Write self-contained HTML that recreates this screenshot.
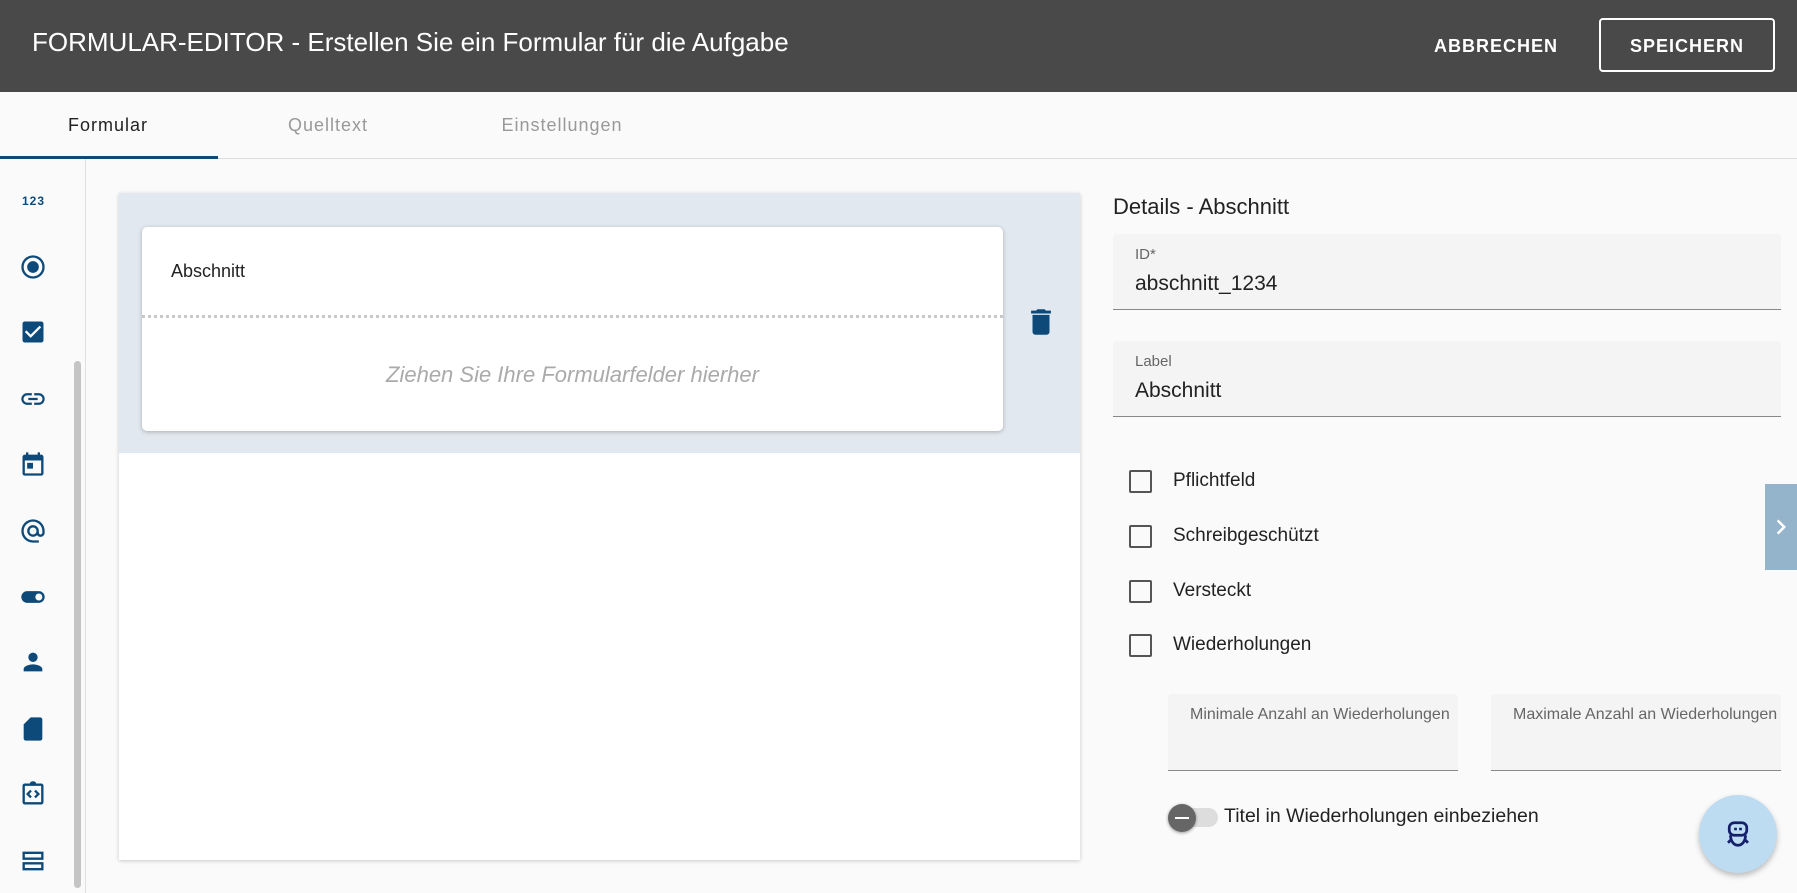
<!DOCTYPE html>
<html><head><meta charset="utf-8"><style>
*{box-sizing:border-box;margin:0;padding:0}
body{width:1797px;height:893px;overflow:hidden;background:#fafafa;font-family:"Liberation Sans",sans-serif;position:relative;color:#222}
.abs{position:absolute}
.hdr{left:0;top:0;width:1797px;height:92px;background:#494949;color:#fff}
.title{left:32px;top:27px;font-size:26px;white-space:nowrap}
.btn{font-size:18px;font-weight:bold;letter-spacing:1px;color:#fff}
.tabs{left:0;top:92px;width:1797px;height:67px;border-bottom:1px solid #ddd;background:#fafafa}
.tab{top:115px;font-size:18px;letter-spacing:1px;color:#999;transform:translateX(-50%)}
.side{left:0;top:159px;width:86px;height:734px;border-right:1px solid #e0e0e0}
.ic{left:19px;width:28px;height:28px;fill:#0d4a7a}
.field{background:#f4f4f4;border-bottom:1px solid #888;border-radius:4px 4px 0 0}
.flab{font-size:15px;color:#666;position:absolute;left:22px;top:12px;white-space:nowrap;overflow:hidden}
.fval{font-size:21px;color:#222;position:absolute;left:22px;top:38px}
.cb{left:1129px;width:23px;height:23px;border:2px solid #555;border-radius:2px}
.cbl{left:1173px;font-size:19px;color:#222}
</style></head><body>
<div class="abs hdr"></div>
<div class="abs title" style="color:#fff">FORMULAR-EDITOR - Erstellen Sie ein Formular für die Aufgabe</div>
<div class="abs btn" style="left:1434px;top:36px">ABBRECHEN</div>
<div class="abs" style="left:1599px;top:18px;width:176px;height:54px;border:2px solid #fff;border-radius:4px"></div>
<div class="abs btn" style="left:1599px;top:36px;width:176px;text-align:center">SPEICHERN</div>

<div class="abs tabs"></div>
<div class="abs tab" style="left:108px;color:#222">Formular</div>
<div class="abs tab" style="left:328px">Quelltext</div>
<div class="abs tab" style="left:562px">Einstellungen</div>
<div class="abs" style="left:0;top:156px;width:218px;height:3px;background:#0d4a7a"></div>

<div class="abs side"></div>
<div class="abs" style="left:74px;top:361px;width:7px;height:527px;background:#c4c4c4;border-radius:4px"></div>
<div class="abs" style="left:22px;top:194px;font-size:12px;font-weight:bold;color:#0d4a7a;letter-spacing:1px">123</div>
<svg class="abs ic" style="top:253px" viewBox="0 0 24 24"><path d="M12 7a5 5 0 100 10 5 5 0 000-10zm0-5a10 10 0 100 20 10 10 0 000-20zm0 18a8 8 0 110-16 8 8 0 010 16z"/></svg>
<svg class="abs ic" style="top:318px" viewBox="0 0 24 24"><path d="M19 3H5a2 2 0 00-2 2v14a2 2 0 002 2h14a2 2 0 002-2V5a2 2 0 00-2-2zm-9 14l-5-5 1.4-1.4 3.6 3.6 7.6-7.6L19 8l-9 9z"/></svg>
<svg class="abs ic" style="top:385px" viewBox="0 0 24 24"><path d="M3.9 12c0-1.7 1.4-3.1 3.1-3.1h4V7H7a5 5 0 000 10h4v-1.9H7c-1.7 0-3.1-1.4-3.1-3.1zM8 13h8v-2H8v2zm9-6h-4v1.9h4c1.7 0 3.1 1.4 3.1 3.1s-1.4 3.1-3.1 3.1h-4V17h4a5 5 0 000-10z"/></svg>
<svg class="abs ic" style="top:450px" viewBox="0 0 24 24"><path d="M19 4h-1V2h-2v2H8V2H6v2H5a2 2 0 00-2 2v14a2 2 0 002 2h14a2 2 0 002-2V6a2 2 0 00-2-2zm0 16H5V9h14v11zM7 11h5v5H7z"/></svg>
<svg class="abs ic" style="top:517px" viewBox="0 0 24 24"><path d="M12 2a10 10 0 000 20h5v-2h-5a8 8 0 118-8v1.4c0 .8-.7 1.6-1.5 1.6s-1.5-.8-1.5-1.6V12a5 5 0 10-1.5 3.5 3.7 3.7 0 003 1.5c2 0 3.5-1.6 3.5-3.6V12A10 10 0 0012 2zm0 13a3 3 0 110-6 3 3 0 010 6z"/></svg>
<svg class="abs ic" style="top:583px" viewBox="0 0 24 24"><path d="M17 7H7a5 5 0 000 10h10a5 5 0 000-10zm0 8a3 3 0 110-6 3 3 0 010 6z"/></svg>
<svg class="abs ic" style="top:648px" viewBox="0 0 24 24"><path d="M12 12a4 4 0 100-8 4 4 0 000 8zm0 2c-2.7 0-8 1.3-8 4v2h16v-2c0-2.7-5.3-4-8-4z"/></svg>
<svg class="abs ic" style="top:715px" viewBox="0 0 24 24"><path d="M10 2h8a2 2 0 012 2v16a2 2 0 01-2 2H6a2 2 0 01-2-2V8z"/></svg>
<svg class="abs ic" style="top:780px" viewBox="0 0 24 24"><path d="M19 3h-4.2A3 3 0 009.2 3H5a2 2 0 00-2 2v14a2 2 0 002 2h14a2 2 0 002-2V5a2 2 0 00-2-2zm0 16H5V5h14v14zM9.6 15.6L6 12l3.6-3.6L11 9.8 8.8 12l2.2 2.2zm4.8 0L13 14.2l2.2-2.2L13 9.8l1.4-1.4L18 12z"/></svg>
<svg class="abs ic" style="top:847px" viewBox="0 0 24 24"><path d="M3 4h18v7H3zm2 2v3h14V6zM3 13h18v7H3zm2 2v3h14v-3z"/></svg>

<div class="abs" style="left:119px;top:193px;width:961px;height:667px;background:#fff;box-shadow:0 1px 4px rgba(0,0,0,.2)"></div>
<div class="abs" style="left:119px;top:193px;width:961px;height:260px;background:#e1e8ef"></div>
<div class="abs" style="left:142px;top:227px;width:861px;height:204px;background:#fff;border-radius:5px;box-shadow:0 1px 4px rgba(0,0,0,.25)"></div>
<div class="abs" style="left:171px;top:261px;font-size:18px;color:#222">Abschnitt</div>
<div class="abs" style="left:142px;top:315px;width:861px;border-top:3px dotted #c8c8c8"></div>
<div class="abs" style="left:142px;top:362px;width:861px;text-align:center;font-size:22px;font-style:italic;color:#aaa">Ziehen Sie Ihre Formularfelder hierher</div>
<svg class="abs" style="left:1024px;top:304px;width:34px;height:36px" viewBox="0 0 24 24"><path fill="#0d4a7a" d="M6 19a2 2 0 002 2h8a2 2 0 002-2V7H6v12zM19 4h-3.5l-1-1h-5l-1 1H5v2h14V4z"/></svg>

<div class="abs" style="left:1113px;top:194px;font-size:22px;color:#222">Details - Abschnitt</div>
<div class="abs field" style="left:1113px;top:234px;width:668px;height:76px"><div class="flab">ID*</div><div class="fval">abschnitt_1234</div></div>
<div class="abs field" style="left:1113px;top:341px;width:668px;height:76px"><div class="flab">Label</div><div class="fval">Abschnitt</div></div>

<div class="abs cb" style="top:470px"></div><div class="abs cbl" style="top:470px">Pflichtfeld</div>
<div class="abs cb" style="top:525px"></div><div class="abs cbl" style="top:525px">Schreibgeschützt</div>
<div class="abs cb" style="top:580px"></div><div class="abs cbl" style="top:580px">Versteckt</div>
<div class="abs cb" style="top:634px"></div><div class="abs cbl" style="top:634px">Wiederholungen</div>

<div class="abs field" style="left:1168px;top:694px;width:290px;height:77px"><div class="flab" style="width:268px;font-size:16px">Minimale Anzahl an Wiederholungen</div></div>
<div class="abs field" style="left:1491px;top:694px;width:290px;height:77px"><div class="flab" style="width:268px;font-size:16px">Maximale Anzahl an Wiederholungen</div></div>

<div class="abs" style="left:1172px;top:808px;width:46px;height:19px;background:#ddd;border-radius:10px"></div>
<div class="abs" style="left:1168px;top:804px;width:28px;height:28px;background:#666;border-radius:50%;box-shadow:0 1px 3px rgba(0,0,0,.4)"></div>
<div class="abs" style="left:1175px;top:817px;width:14px;height:2px;background:#fff"></div>
<div class="abs" style="left:1224px;top:805px;font-size:19.5px;color:#222">Titel in Wiederholungen einbeziehen</div>

<div class="abs" style="left:1765px;top:484px;width:32px;height:86px;background:#94b4cb"></div>
<svg class="abs" style="left:1766px;top:511px;width:30px;height:32px" viewBox="0 0 24 24"><path fill="#fff" d="M8.6 16.6L13.2 12 8.6 7.4 10 6l6 6-6 6z"/></svg>

<div class="abs" style="left:1699px;top:795px;width:78px;height:78px;border-radius:50%;background:#bddcf2;box-shadow:0 3px 6px rgba(0,0,0,.25)"></div>
<svg class="abs" style="left:1723px;top:818px;width:30px;height:32px" viewBox="0 0 24 24" fill="none" stroke="#14206b" stroke-width="2.2"><rect x="5" y="3" width="14" height="10" rx="4"/><path d="M10 7v2M14 7v2"/><path d="M6 13c0 5 3 8 6 8s6-3 6-8M6 17l-2 2M18 17l2 2" /></svg>
</body></html>
